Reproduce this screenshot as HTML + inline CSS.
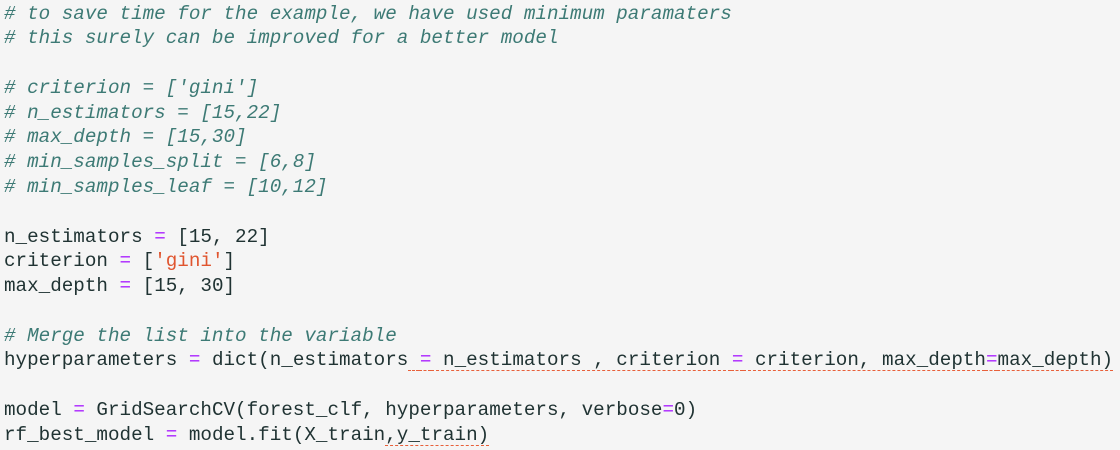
<!DOCTYPE html>
<html><head><style>
body{margin:0;background:#f5f5f5;width:1120px;height:450px;overflow:hidden}
pre{margin:0;padding:1.5px 0 0 4px;font-family:"Liberation Mono",monospace;font-size:19.25px;line-height:24.78px;color:#203333}
.c{color:#3d7a75;font-style:italic}
.o{color:#aa22ff}
.s{color:#e0552f}
.u{text-decoration:underline dashed #e8603a;text-underline-offset:5px;text-decoration-thickness:1px}
</style></head><body><pre><span class="c"># to save time for the example, we have used minimum paramaters
# this surely can be improved for a better model</span>

<span class="c"># criterion = ['gini']
# n_estimators = [15,22]
# max_depth = [15,30]
# min_samples_split = [6,8]
# min_samples_leaf = [10,12]</span>

n_estimators <span class="o">=</span> [15, 22]
criterion <span class="o">=</span> [<span class="s">'gini'</span>]
max_depth <span class="o">=</span> [15, 30]

<span class="c"># Merge the list into the variable</span>
hyperparameters <span class="o">=</span> dict(n_estimators<span class="u"> <span class="o">=</span> n_estimators , criterion <span class="o">=</span> criterion, max_depth<span class="o">=</span>max_depth)</span>

model <span class="o">=</span> GridSearchCV(forest_clf, hyperparameters, verbose<span class="o">=</span>0)
rf_best_model <span class="o">=</span> model.fit(X_train<span class="u">,y_train)</span>
</pre></body></html>
